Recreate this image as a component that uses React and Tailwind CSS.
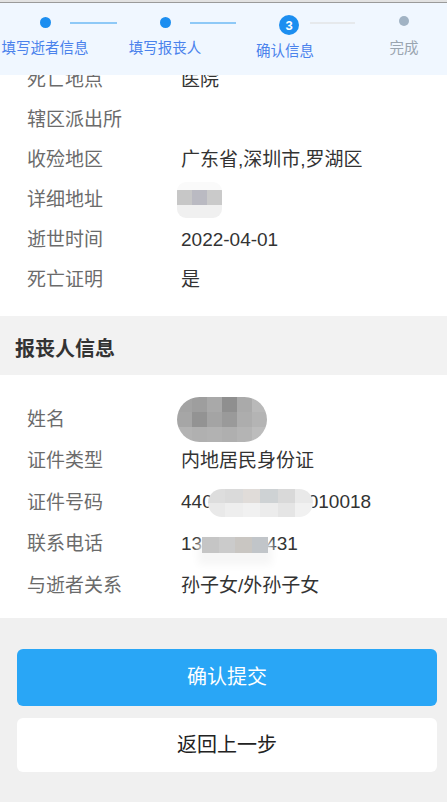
import React from 'react';

const font = { fontFamily: '"Liberation Sans", "Noto Sans CJK SC", sans-serif' };

const steps = [
    { label: '填写逝者信息', left: 'ml-0', kind: 'done', line: 'left-[70px] w-[47px] bg-[#8ec9f7]' },
    { label: '填写报丧人', left: 'ml-[30px]', kind: 'done', line: 'left-[70px] w-[46px] bg-[#8ec9f7]' },
    { label: '确认信息', left: 'ml-[34px]', kind: 'current', line: 'left-[66px] w-[45px] bg-[#e6e9ec]' },
    { label: '完成', left: 'ml-[25px]', kind: 'todo', line: null }
];

const deceasedRows = [
    { label: '死亡地点', value: '医院' },
    { label: '辖区派出所', value: '' },
    { label: '收殓地区', value: '广东省,深圳市,罗湖区' },
    { label: '详细地址', value: 'blob-address' },
    { label: '逝世时间', value: '2022-04-01' },
    { label: '死亡证明', value: '是' }
];

const AddressBlob = () => (
    <span className="inline-flex flex-col w-[45px] h-[36px] -ml-[4px] rounded-[9px] overflow-hidden align-middle">
        <span className="h-[8px] bg-[#fafafa]" />
        <span className="flex h-[15px]">
            <span className="flex-1 bg-[#c7c7c7]" />
            <span className="flex-1 bg-[#babac2]" />
            <span className="flex-1 bg-[#cacaca]" />
        </span>
        <span className="h-[13px] bg-[#f0f0f0]" />
    </span>
);

const NameBlob = () => (
    <span className="grid grid-cols-6 grid-rows-3 w-[90px] h-[45px] -ml-[4px] rounded-full overflow-hidden align-middle">
        <span className="bg-[#a3a3a3]" /><span className="bg-[#9e9e9e]" /><span className="bg-[#a9a9a9]" /><span className="bg-[#8f8f8f]" /><span className="bg-[#aaaaaa]" /><span className="bg-[#b9b9b9]" />
        <span className="bg-[#a6a6a6]" /><span className="bg-[#939393]" /><span className="bg-[#a4a4a4]" /><span className="bg-[#9a9a9a]" /><span className="bg-[#adadad]" /><span className="bg-[#b4b4b4]" />
        <span className="bg-[#b3b3b3]" /><span className="bg-[#b0b0b0]" /><span className="bg-[#b2b2b2]" /><span className="bg-[#afafaf]" /><span className="bg-[#b4b4b4]" /><span className="bg-[#bcbcbc]" />
    </span>
);

const IdBlob = () => (
    <span className="relative z-10 inline-grid grid-cols-6 grid-rows-2 w-[105px] h-[28px] -ml-[5px] -mr-[5px] rounded-[14px] overflow-hidden align-middle">
        <span className="bg-[#dddddd]" /><span className="bg-[#dadada]" /><span className="bg-[#e0dcd9]" /><span className="bg-[#ced2d4]" /><span className="bg-[#d9d9d9]" /><span className="bg-[#e9e9e9]" />
        <span className="bg-[#e9e9e9]" /><span className="bg-[#eeeeee]" /><span className="bg-[#f1f1f1]" /><span className="bg-[#ececec]" /><span className="bg-[#e5e5e5]" /><span className="bg-[#f1f1f1]" />
    </span>
);

const PhoneBlob = () => (
    <span className="relative z-10 inline-flex w-[66px] h-[16px] -mr-[2px] align-middle shadow-[0_8px_8px_4px_#f6f6f6]">
        <span className="flex-1 bg-[#c5c5c5]" />
        <span className="flex-1 bg-[#cbcbcb]" />
        <span className="flex-1 bg-[#c9c6c2]" />
        <span className="flex-1 bg-[#c1c5c9]" />
    </span>
);

const Row = ({ label, children, height }) => (
    <div className={`flex items-center ${height}`}>
        <div className="w-[181px] shrink-0 pl-[27px] text-[19px] text-[#6b6b6b]">{label}</div>
        <div className="flex-1 text-[19px] text-[#333333] whitespace-nowrap">{children}</div>
    </div>
);

const StepIndicator = ({ kind }) => {
    if (kind === 'current') {
        return (
            <div className="w-[20px] h-[20px] mt-[6px] rounded-full bg-[#1c8ef0] text-white text-[13px] font-bold flex items-center justify-center leading-none">
                3
            </div>
        );
    }
    if (kind === 'todo') {
        return <div className="w-[10px] h-[10px] -mt-[2px] rounded-full bg-[#a1b3c4]" />;
    }
    return <div className="w-[11px] h-[11px] rounded-full bg-[#1c8ef0]" />;
};

const Stepper = () => (
    <div className="absolute top-0 left-0 right-0 z-20">
        <div className="h-[3px] bg-[#e2e2e2] border-b border-[#9a9a9a]" />
        <div className="h-[72px] bg-[#f0f7ff] flex overflow-hidden">
            {steps.map((step) => (
                <div key={step.label} className={`relative w-[90px] shrink-0 pt-[9px] flex flex-col items-center ${step.left}`}>
                    {step.line && <div className={`absolute top-[19px] h-[2px] ${step.line}`} />}
                    <div className="h-[20px] flex items-center justify-center">
                        <StepIndicator kind={step.kind} />
                    </div>
                    <div
                        className={`whitespace-nowrap text-[14.5px] leading-[20px] ${step.kind === 'current' ? 'mt-[9px] -ml-[8px]' : 'mt-[6px]'} ${step.kind === 'todo' ? 'text-[#9aa5b0]' : 'text-[#4a82ec]'}`}
                    >
                        {step.label}
                    </div>
                </div>
            ))}
        </div>
    </div>
);

const App = () => {
    return (
        <div className="relative w-full min-h-screen bg-[#f0f0f0] overflow-hidden" style={font}>
            <Stepper />

            <section className="bg-white pt-[60px] pb-[16px]">
                {deceasedRows.map((row) => (
                    <Row key={row.label} label={row.label} height="h-[40px]">
                        {row.value === 'blob-address' ? <AddressBlob /> : row.value}
                    </Row>
                ))}
            </section>

            <div className="h-[59px] bg-[#f2f2f2] pl-[15px] pt-[6px] flex items-center text-[20px] font-bold text-[#333333]">
                报丧人信息
            </div>

            <section className="bg-white pt-[24px] pb-[11px]">
                <Row label="姓名" height="h-[41.5px]">
                    <NameBlob />
                </Row>
                <Row label="证件类型" height="h-[41.5px]">内地居民身份证</Row>
                <Row label="证件号码" height="h-[41.5px]">
                    440<IdBlob />010018
                </Row>
                <Row label="联系电话" height="h-[41.5px]">
                    13<PhoneBlob />431
                </Row>
                <Row label="与逝者关系" height="h-[41.5px]">孙子女/外孙子女</Row>
            </section>

            <div className="pt-[31px] pb-[31px] pl-[17px] pr-[10px] flex flex-col gap-[12px]">
                <button className="h-[57px] rounded-[6px] bg-[#29a6f6] text-white text-[20px]">
                    确认提交
                </button>
                <button className="h-[54px] rounded-[6px] bg-white text-[#222222] text-[20px]">
                    返回上一步
                </button>
            </div>
        </div>
    );
};

export default App;
